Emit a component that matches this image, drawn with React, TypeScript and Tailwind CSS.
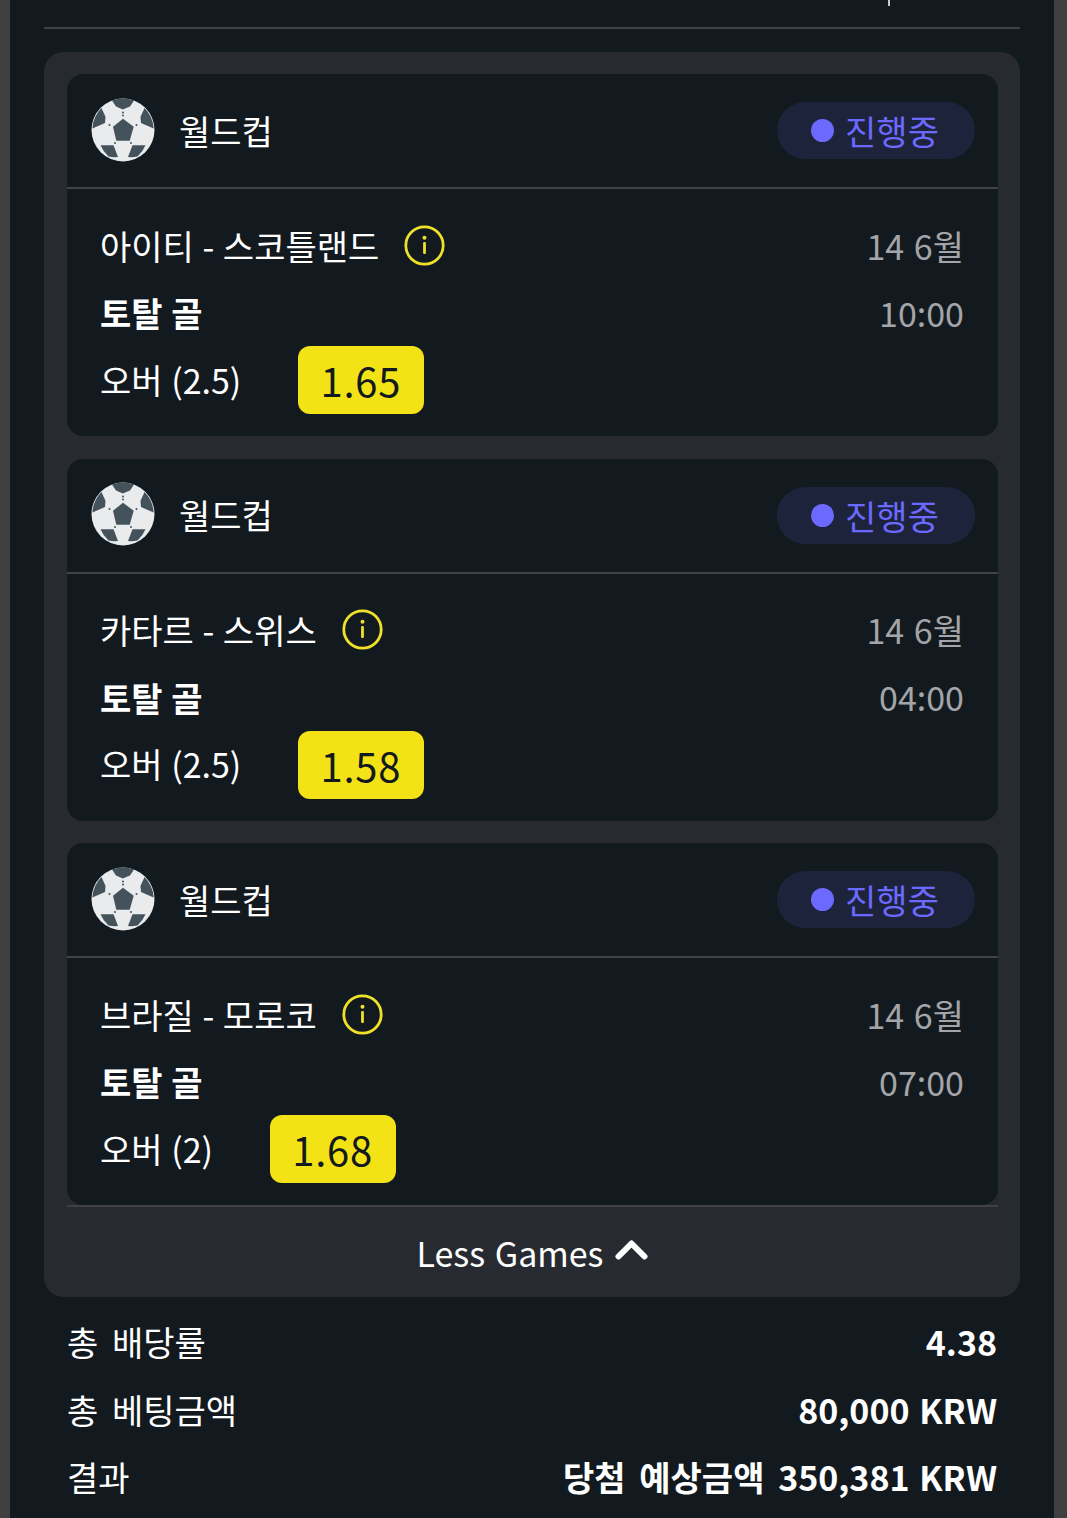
import type { ReactNode } from "react";

const font = "[font-family:'Noto_Sans_CJK_KR','Noto_Sans',sans-serif]";

function Ball() {
  return (
    <svg width="64" height="64" viewBox="0 0 64 64" className="mb-[2px] shrink-0">
      <circle cx="32" cy="32" r="31.500" fill="#e9ebed" />
      <g fill="#44525b">
        <polygon points="32,20.700 42.700,28.700 38.700,42.700 25.300,42.700 22,28.700" />
        <path d="M21 2.500 A31 31 0 0 1 43 2.500 L39 8.500 L31.800 11.500 L25 8.500 Z" />
        <path d="M53.500 10 A31 31 0 0 1 62.600 30.500 L50 25 L49.500 19 Z" />
        <path d="M10.500 10 A31 31 0 0 0 1.400 30.500 L14 25 L14.500 19 Z" />
        <path d="M9.500 47.300 L22.500 47.300 L27 59 A31 31 0 0 1 17.500 58.500 A31 31 0 0 1 9.500 47.300 Z" />
        <path d="M54.500 47.300 L41.500 47.300 L37 59 A31 31 0 0 0 46.500 58.500 A31 31 0 0 0 54.500 47.300 Z" />
      </g>
      <g fill="#44525b">
        <circle cx="32" cy="14.500" r="1" />
        <circle cx="32" cy="17.500" r="1" />
        <circle cx="45.500" cy="27" r="1" />
        <circle cx="18.500" cy="27" r="1" />
        <circle cx="24" cy="45" r="1" />
        <circle cx="40" cy="45" r="1" />
      </g>
    </svg>
  );
}

function Info() {
  return (
    <svg width="41" height="41" viewBox="0 0 41 41" fill="none" className="shrink-0">
      <circle cx="20.500" cy="20.500" r="18.700" stroke="#efe02a" strokeWidth="2.800" />
      <circle cx="20.500" cy="12.800" r="2" fill="#efe02a" />
      <rect x="19.100" y="17" width="2.800" height="12" rx="1" fill="#efe02a" />
    </svg>
  );
}

function Card({ title, date, time, pick, odd }: { title: string; date: string; time: string; pick: string; odd: string }) {
  return (
    <div className="rounded-[16px] bg-[#131a1f]">
      <div className="flex h-[115px] items-center justify-between border-b-2 border-[#3f4246] pl-[24px] pr-[23px]">
        <div className="flex items-center gap-[24px]">
          <Ball />
          <span className="text-[34px] leading-[48px] text-white">월드컵</span>
        </div>
        <div className="flex h-[57px] w-[198px] items-center justify-center gap-[11px] rounded-full bg-[#1e233c] pr-[2px] text-[34px] text-[#6c69ff]">
          <span className="h-[23px] w-[23px] rounded-full bg-[#6c69ff]" />
          <span>진행중</span>
        </div>
      </div>
      <div className="flex justify-between pb-[22px] pl-[33px] pr-[34px] pt-[22px]">
        <div className="flex flex-col">
          <div className="flex h-[68px] items-center gap-[25px] text-[34px] text-white">
            <span>{title}</span>
            <Info />
          </div>
          <div className="flex h-[67px] items-center text-[34px] font-bold text-white">토탈 골</div>
          <div className="flex h-[68px] items-center gap-[57px] text-[34px] text-white">
            <span className="-mt-[2px]">{pick}</span>
            <span className="flex h-[68px] w-[126px] items-center justify-center rounded-[12px] bg-[#f3e216] pr-[1px] text-[40px] tracking-[0.7px] text-[#131a1f]">{odd}</span>
          </div>
        </div>
        <div className="flex flex-col items-end text-[34px] text-[#a3a5a8] [word-spacing:2px]">
          <div className="flex h-[68px] items-center">{date}</div>
          <div className="flex h-[66px] items-center">{time}</div>
        </div>
      </div>
    </div>
  );
}

function Row({ left, children }: { left: string; children: ReactNode }) {
  return (
    <div className="flex h-[67.500px] items-center justify-between text-[34px] text-white [word-spacing:6px]">
      <span>{left}</span>
      <span className="font-bold">{children}</span>
    </div>
  );
}

function Amount({ value }: { value: string }) {
  return <span className="[word-spacing:2px]">{value}</span>;
}

export default function App() {
  return (
    <div className={`h-[1518px] w-[1067px] overflow-hidden bg-[#3f3f3f] pl-[10px] pr-[13px] [word-spacing:1px] ${font}`}>
      <div className="h-full bg-[#131a1f] px-[34px]">
        <div className="relative h-[29px] border-b-2 border-[#3f4246]">
          <span className="absolute left-[844px] top-0 h-[6px] w-[2px] bg-[#c9cacb]" />
        </div>
        <div className="mt-[23px] rounded-[20px] bg-[#282a31] pl-[23px] pr-[22px] pt-[22px]">
          <div className="flex flex-col gap-[22.500px]">
            <Card title="아이티 - 스코틀랜드" date="14 6월" time="10:00" pick="오버 (2.5)" odd="1.65" />
            <Card title="카타르 - 스위스" date="14 6월" time="04:00" pick="오버 (2.5)" odd="1.58" />
            <Card title="브라질 - 모로코" date="14 6월" time="07:00" pick="오버 (2)" odd="1.68" />
          </div>
          <div className="flex h-[92px] items-center justify-center gap-[11px] border-t-2 border-[#3f4246] pr-[1px] text-[34px] text-white [word-spacing:2px]">
            <span>Less Games</span>
            <svg width="33" height="22" viewBox="0 0 33 22" fill="none" className="mb-[6px]">
              <path d="M3.500 18.500 L16.500 5.500 L29.500 18.500" stroke="white" strokeWidth="6" strokeLinecap="round" strokeLinejoin="round" />
            </svg>
          </div>
        </div>
        <div className="mt-[11px] px-[23px]">
          <Row left="총 배당률"><Amount value="4.38" /></Row>
          <Row left="총 베팅금액"><Amount value="80,000 KRW" /></Row>
          <Row left="결과">당첨 예상금액 <Amount value="350,381 KRW" /></Row>
        </div>
      </div>
    </div>
  );
}
